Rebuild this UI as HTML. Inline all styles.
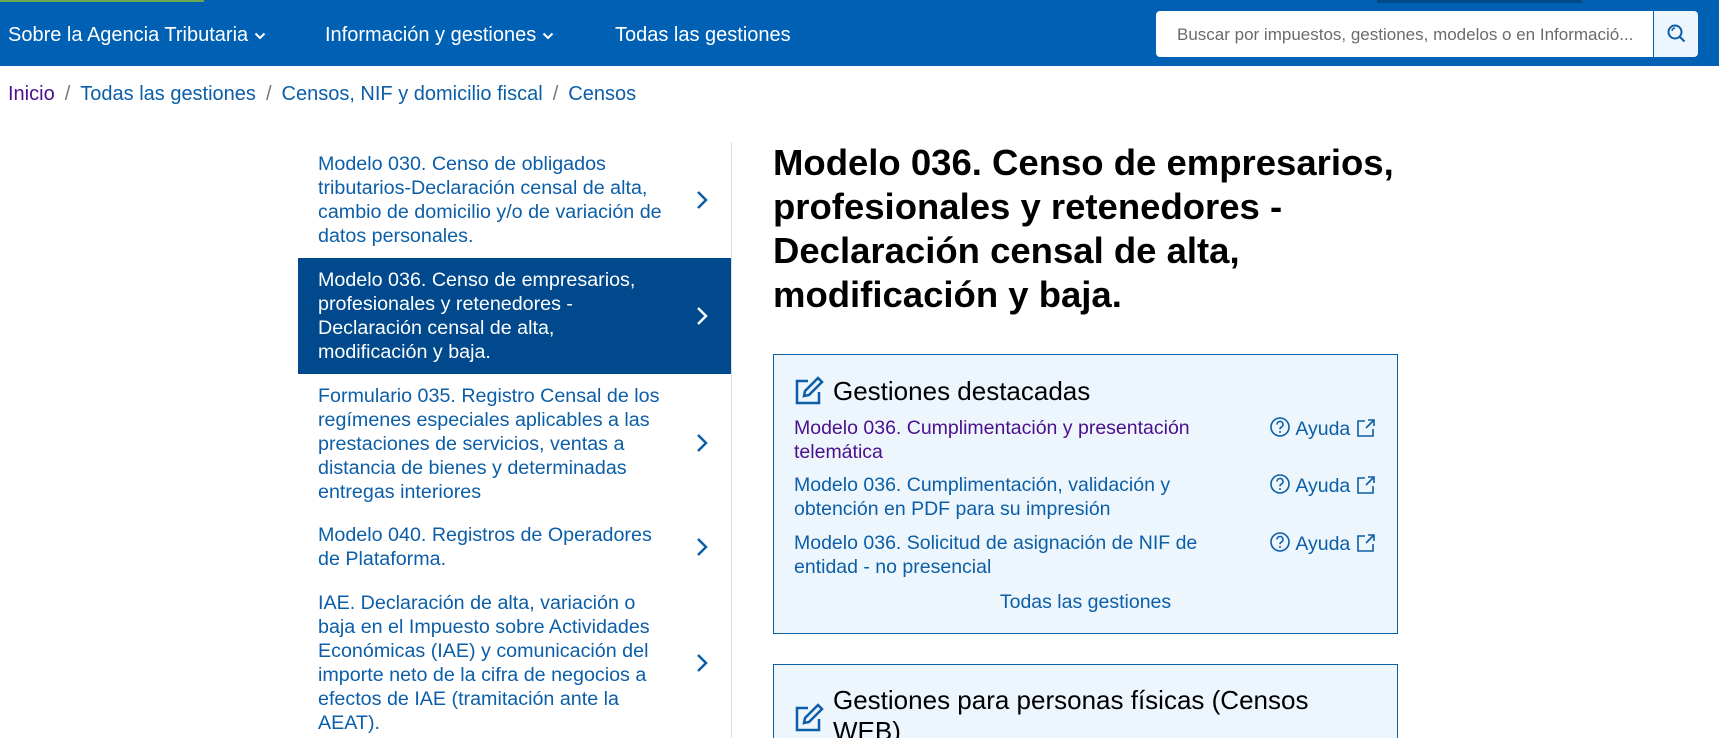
<!DOCTYPE html>
<html><head><meta charset="utf-8"><style>
*{margin:0;padding:0;box-sizing:border-box}
html{height:738px;overflow:hidden}
body{width:1719px;height:738px;overflow:hidden;background:#fff;font-family:"Liberation Sans",sans-serif;position:relative}
.hdr{position:absolute;left:0;top:0;width:1719px;height:66px;background:#0060b4}
.green{position:absolute;left:0;top:0;width:204px;height:2px;background:#6aa84f}
.dark{position:absolute;left:1377px;top:0;width:205px;height:3px;background:#004a8a}
.nav{position:absolute;top:24px;color:#fff;font-size:20px;white-space:nowrap}
.nav svg{vertical-align:middle;margin-left:6px}
.search{position:absolute;left:1156px;top:11px;width:497px;height:46px;background:#fff;border-radius:4px 0 0 4px;color:#6b6b6b;font-size:17px;padding:14px 0 0 21px;white-space:nowrap}
.sbtn{position:absolute;left:1653px;top:11px;width:45px;height:46px;background:#eef6fd;border-radius:0 4px 4px 0;border-left:1px solid #0060b4}
.bc{position:absolute;left:8px;top:83px;font-size:20px;color:#0b5ea7;white-space:nowrap}
.bc .s{color:#777;margin:0 10px}
.side{position:absolute;left:298px;top:142px;width:434px;border-right:1px solid #ddd;height:610px}
.it{position:relative;padding:10px 62px 9.8px 20px;font-size:19.7px;line-height:24px;color:#0b5ea7}
.it.a{background:#00498c;color:#fff}
.it svg{position:absolute;right:22px;top:50%;margin-top:-11px}
h1{position:absolute;left:773px;top:141px;font-size:36.5px;line-height:44px;font-weight:bold;color:#000;width:700px}
.box{position:absolute;left:773px;width:625px;background:#eef6fd;border:1px solid #0b5fa5}
.bh{font-size:26px;color:#000;position:absolute;left:59px}
.ic{position:absolute;left:20px}
.lk{position:absolute;left:20px;font-size:19.5px;line-height:24px;color:#0b5ea7;width:440px}
.ay{position:absolute;left:495px;font-size:19.5px;color:#0b5ea7;white-space:nowrap}
.ay svg{vertical-align:-3px}
</style></head><body>
<div class="hdr"></div><div class="green"></div><div class="dark"></div>
<div class="nav" style="left:8px">Sobre la Agencia Tributaria<svg width="12" height="8" viewBox="0 0 12 8"><path d="M1.5 1.5l4.5 4.5 4.5-4.5" stroke="#fff" stroke-width="2" fill="none"/></svg></div>
<div class="nav" style="left:325px">Información y gestiones<svg width="12" height="8" viewBox="0 0 12 8"><path d="M1.5 1.5l4.5 4.5 4.5-4.5" stroke="#fff" stroke-width="2" fill="none"/></svg></div>
<div class="nav" style="left:615px">Todas las gestiones</div>
<div class="search">Buscar por impuestos, gestiones, modelos o en Informació...</div>
<div class="sbtn"><svg width="44" height="46" viewBox="0 0 44 46"><circle cx="21" cy="21" r="6.5" stroke="#0b5ea7" stroke-width="2" fill="none"/><path d="M25.5 25.5l5 5" stroke="#0b5ea7" stroke-width="2"/><path d="M18 20a3.5 3.5 0 0 1 3-3" stroke="#0b5ea7" stroke-width="1.5" fill="none"/></svg></div>
<div class="bc"><span style="color:#4b0f8c">Inicio</span><span class="s">/</span>Todas las gestiones<span class="s">/</span>Censos, NIF y domicilio fiscal<span class="s">/</span>Censos</div>
<div class="side">
<div class="it">Modelo 030. Censo de obligados tributarios-Declaración censal de alta, cambio de domicilio y/o de variación de datos personales.<svg width="14" height="22" viewBox="0 0 14 22"><path d="M3 3l8 8-8 8" stroke="#0b5ea7" stroke-width="2.5" fill="none"/></svg></div>
<div class="it a">Modelo 036. Censo de empresarios, profesionales y retenedores -<br>Declaración censal de alta, modificación y baja.<svg width="14" height="22" viewBox="0 0 14 22"><path d="M3 3l8 8-8 8" stroke="#fff" stroke-width="2.5" fill="none"/></svg></div>
<div class="it">Formulario 035. Registro Censal de los regímenes especiales aplicables a las prestaciones de servicios, ventas a distancia de bienes y determinadas entregas interiores<svg width="14" height="22" viewBox="0 0 14 22"><path d="M3 3l8 8-8 8" stroke="#0b5ea7" stroke-width="2.5" fill="none"/></svg></div>
<div class="it">Modelo 040. Registros de Operadores<br>de Plataforma.<svg width="14" height="22" viewBox="0 0 14 22"><path d="M3 3l8 8-8 8" stroke="#0b5ea7" stroke-width="2.5" fill="none"/></svg></div>
<div class="it">IAE. Declaración de alta, variación o<br>baja en el Impuesto sobre Actividades Económicas (IAE) y comunicación del importe neto de la cifra de negocios a efectos de IAE (tramitación ante la AEAT).<svg width="14" height="22" viewBox="0 0 14 22"><path d="M3 3l8 8-8 8" stroke="#0b5ea7" stroke-width="2.5" fill="none"/></svg></div>
</div>
<h1>Modelo 036. Censo de empresarios, profesionales y retenedores - Declaración censal de alta, modificación y baja.</h1>
<div class="box" style="top:354px;height:280px">
<svg class="ic" style="top:21px" width="30" height="30" viewBox="0 0 30 30"><path d="M14 5H3v22h22V16" stroke="#0b5ea7" stroke-width="2.5" fill="none"/><path d="M24 2l4 4-13 13-5 1 1-5z" stroke="#0b5ea7" stroke-width="2.5" fill="none"/></svg>
<div class="bh" style="top:21px">Gestiones destacadas</div>
<div class="lk" style="top:61px;color:#4b0f8c">Modelo 036. Cumplimentación y presentación telemática</div>
<div class="lk" style="top:118px">Modelo 036. Cumplimentación, validación y obtención en PDF para su impresión</div>
<div class="lk" style="top:176px">Modelo 036. Solicitud de asignación de NIF de entidad - no presencial</div>
<div class="ay" style="top:61px"><svg width="22" height="22" viewBox="0 0 22 22"><circle cx="11" cy="11" r="9" stroke="#0b5ea7" stroke-width="1.6" fill="none"/><path d="M8 8.5a3 3 0 1 1 4 2.8c-.8.4-1 1-1 2" stroke="#0b5ea7" stroke-width="1.6" fill="none"/><circle cx="11" cy="16" r="1" fill="#0b5ea7"/></svg> Ayuda <svg width="20" height="20" viewBox="0 0 20 20"><path d="M9 3H2v15h15v-7M12 2h6v6M18 2l-8 8" stroke="#0b5ea7" stroke-width="1.6" fill="none"/></svg></div>
<div class="ay" style="top:118px"><svg width="22" height="22" viewBox="0 0 22 22"><circle cx="11" cy="11" r="9" stroke="#0b5ea7" stroke-width="1.6" fill="none"/><path d="M8 8.5a3 3 0 1 1 4 2.8c-.8.4-1 1-1 2" stroke="#0b5ea7" stroke-width="1.6" fill="none"/><circle cx="11" cy="16" r="1" fill="#0b5ea7"/></svg> Ayuda <svg width="20" height="20" viewBox="0 0 20 20"><path d="M9 3H2v15h15v-7M12 2h6v6M18 2l-8 8" stroke="#0b5ea7" stroke-width="1.6" fill="none"/></svg></div>
<div class="ay" style="top:176px"><svg width="22" height="22" viewBox="0 0 22 22"><circle cx="11" cy="11" r="9" stroke="#0b5ea7" stroke-width="1.6" fill="none"/><path d="M8 8.5a3 3 0 1 1 4 2.8c-.8.4-1 1-1 2" stroke="#0b5ea7" stroke-width="1.6" fill="none"/><circle cx="11" cy="16" r="1" fill="#0b5ea7"/></svg> Ayuda <svg width="20" height="20" viewBox="0 0 20 20"><path d="M9 3H2v15h15v-7M12 2h6v6M18 2l-8 8" stroke="#0b5ea7" stroke-width="1.6" fill="none"/></svg></div>
<div style="position:absolute;top:236px;left:0;width:100%;text-align:center;font-size:19.5px;color:#0b5ea7">Todas las gestiones</div>
</div>
<div class="box" style="top:664px;height:80px">
<svg class="ic" style="top:38px" width="30" height="30" viewBox="0 0 30 30"><path d="M14 5H3v22h22V16" stroke="#0b5ea7" stroke-width="2.5" fill="none"/><path d="M24 2l4 4-13 13-5 1 1-5z" stroke="#0b5ea7" stroke-width="2.5" fill="none"/></svg>
<div class="bh" style="top:20px;line-height:31px">Gestiones para personas físicas (Censos<br>WEB)</div>
</div>
</body></html>
